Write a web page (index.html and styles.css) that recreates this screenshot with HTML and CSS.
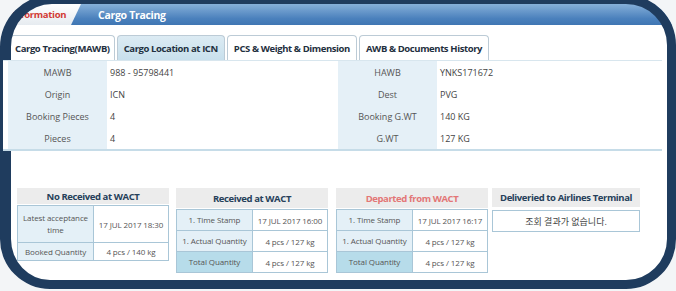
FILE: index.html
```html
<!DOCTYPE html>
<html lang="ko">
<head>
<meta charset="utf-8">
<title>Cargo Tracing</title>
<link rel="stylesheet" href="styles.css">
</head>
<body>
<div class="page">
  <div class="topbar">
    <div class="info-tab">Information</div>
    <div class="title">Cargo Tracing</div>
  </div>

  <div class="tabs">
    <div class="tab">Cargo Tracing(MAWB)</div>
    <div class="tab active">Cargo Location at ICN</div>
    <div class="tab wide">PCS &amp; Weight &amp; Dimension</div>
    <div class="tab wide">AWB &amp; Documents History</div>
  </div>

  <div class="info">
    <div class="lbl">MAWB</div><div class="val">988 - 95798441</div>
    <div class="lbl">HAWB</div><div class="val">YNKS171672</div>
    <div class="lbl">Origin</div><div class="val">ICN</div>
    <div class="lbl">Dest</div><div class="val">PVG</div>
    <div class="lbl">Booking Pieces</div><div class="val">4</div>
    <div class="lbl">Booking G.WT</div><div class="val">140 KG</div>
    <div class="lbl">Pieces</div><div class="val">4</div>
    <div class="lbl">G.WT</div><div class="val">127 KG</div>
  </div>

  <div class="boxes">
    <div class="box box-first">
      <div class="box-head">No Received at WACT</div>
      <table class="grid">
        <tr class="tall"><th class="wrap">Latest acceptance<br>time</th><td>17 JUL 2017 18:30</td></tr>
        <tr class="short"><th>Booked Quantity</th><td>4 pcs / 140 kg</td></tr>
      </table>
    </div>

    <div class="box">
      <div class="box-head">Received at WACT</div>
      <table class="grid">
        <tr><th>1. Time Stamp</th><td>17 JUL 2017 16:00</td></tr>
        <tr><th>1. Actual Quantity</th><td>4 pcs / 127 kg</td></tr>
        <tr class="total"><th>Total Quantity</th><td>4 pcs / 127 kg</td></tr>
      </table>
    </div>

    <div class="box box-third">
      <div class="box-head departed">Departed from WACT</div>
      <table class="grid">
        <tr><th>1. Time Stamp</th><td>17 JUL 2017 16:17</td></tr>
        <tr><th>1. Actual Quantity</th><td>4 pcs / 127 kg</td></tr>
        <tr class="total"><th>Total Quantity</th><td>4 pcs / 127 kg</td></tr>
      </table>
    </div>

    <div class="box box-last">
      <div class="box-head">Deliveried to Airlines Terminal</div>
      <div class="empty">조회 결과가 없습니다.</div>
    </div>
  </div>

  <div class="frame"></div>
</div>
</body>
</html>
```

FILE: styles.css
```css
* { box-sizing: border-box; }

html, body {
  margin: 0;
  padding: 0;
  background: #f3f5f7;
}

body {
  font-family: "Open Sans", "Noto Sans CJK KR", sans-serif;
  color: #444;
}

.page {
  position: relative;
  width: 676px;
  height: 291px;
  overflow: hidden;
  background: #ffffff;
  padding-top: 4px;
}

/* decorative highlight frame that lies over the content */
.frame {
  position: absolute;
  top: -5px;
  left: 0;
  width: 676px;
  height: 294px;
  border: 9px solid #1f3c5e;
  border-left-width: 11px;
  border-radius: 52px 50px 50px 50px;
  box-shadow: 0 0 0 80px #f3f5f7;
  z-index: 1;
  pointer-events: none;
}

/* header bar */
.topbar {
  height: 21px;
  display: flex;
  align-items: stretch;
  background: linear-gradient(#86b0d9, #4a80bc 70%, #3f76b3);
}

.info-tab {
  width: 81px;
  padding-left: 12px;
  display: flex;
  align-items: center;
  font-size: 9.5px;
  font-weight: 700;
  letter-spacing: -0.3px;
  color: #d23a34;
  background: linear-gradient(#ffffff, #e6ebf0);
  clip-path: polygon(0 0, 100% 0, calc(100% - 10px) 100%, 0 100%);
}

.title {
  margin-left: 17px;
  display: flex;
  align-items: center;
  font-size: 10.5px;
  font-weight: 700;
  letter-spacing: -0.3px;
  color: #ffffff;
}

/* tabs */
.tabs {
  display: flex;
  gap: 2px;
  margin-top: 10px;
  padding-left: 10px;
  height: 25px;
}

.tab {
  display: flex;
  align-items: center;
  padding: 0 4px;
  border: 1px solid #bccbd6;
  border-bottom: none;
  border-radius: 4px 4px 0 0;
  background: #ffffff;
  font-size: 9.5px;
  font-weight: 700;
  letter-spacing: -0.4px;
  color: #1f3040;
}

.tab.active {
  padding: 0 6px;
  background: linear-gradient(#dcebf3, #c8e0ed);
}

.tab.wide {
  padding: 0 6px;
}

/* info table */
.info {
  position: relative;
  z-index: 2;
  display: grid;
  grid-template-columns: 99px 231px 99px 1fr;
  grid-auto-rows: 22px;
  margin-left: 3px;
  margin-right: 14px;
  padding-left: 5px;
  background: #ffffff;
  border-top: 1px solid #d8e6ee;
  border-bottom: 2px solid #c6dce8;
  font-size: 9px;
}

.lbl {
  display: flex;
  align-items: center;
  justify-content: center;
  background: #e5f0f7;
  color: #555;
}

.val {
  display: flex;
  align-items: center;
  padding-left: 3px;
  color: #444;
}

/* status boxes */
.boxes {
  display: flex;
  align-items: flex-start;
  gap: 7px;
  margin-top: 37px;
  padding-left: 17px;
}

.box {
  width: 152px;
}

.box-third {
  margin-left: 1px;
  width: 152px;
}

.box-last {
  margin-left: -3px;
  width: 148px;
}

.box-head {
  height: 20px;
  display: flex;
  align-items: center;
  justify-content: center;
  background: #ececec;
  font-size: 9.5px;
  font-weight: 700;
  letter-spacing: -0.4px;
  color: #26405a;
}

.box-first .box-head {
  height: 16px;
}

.box-last .box-head {
  height: 19px;
}

.box-head.departed {
  color: #e37676;
}

.grid {
  width: 100%;
  border-collapse: collapse;
  margin-top: 1px;
  table-layout: fixed;
}

.grid th,
.grid td {
  border: 1px solid #a9c6d7;
  height: 21px;
  padding: 0;
  text-align: center;
  font-weight: 400;
  font-size: 8px;
  letter-spacing: -0.1px;
  white-space: nowrap;
  color: #555;
}

.grid th {
  width: 76px;
  background: #e4f0f7;
  line-height: 12px;
}

.grid th.wrap {
  white-space: normal;
}

.grid td {
  background: #ffffff;
}

.grid .total th {
  background: #b7dcea;
}

.grid .tall th,
.grid .tall td {
  height: 37px;
}

.grid .short th,
.grid .short td {
  height: 18px;
}

.empty {
  margin-top: 3px;
  height: 22px;
  display: flex;
  align-items: center;
  justify-content: center;
  border: 1px solid #a9c6d7;
  font-size: 9px;
  color: #444;
}
```
